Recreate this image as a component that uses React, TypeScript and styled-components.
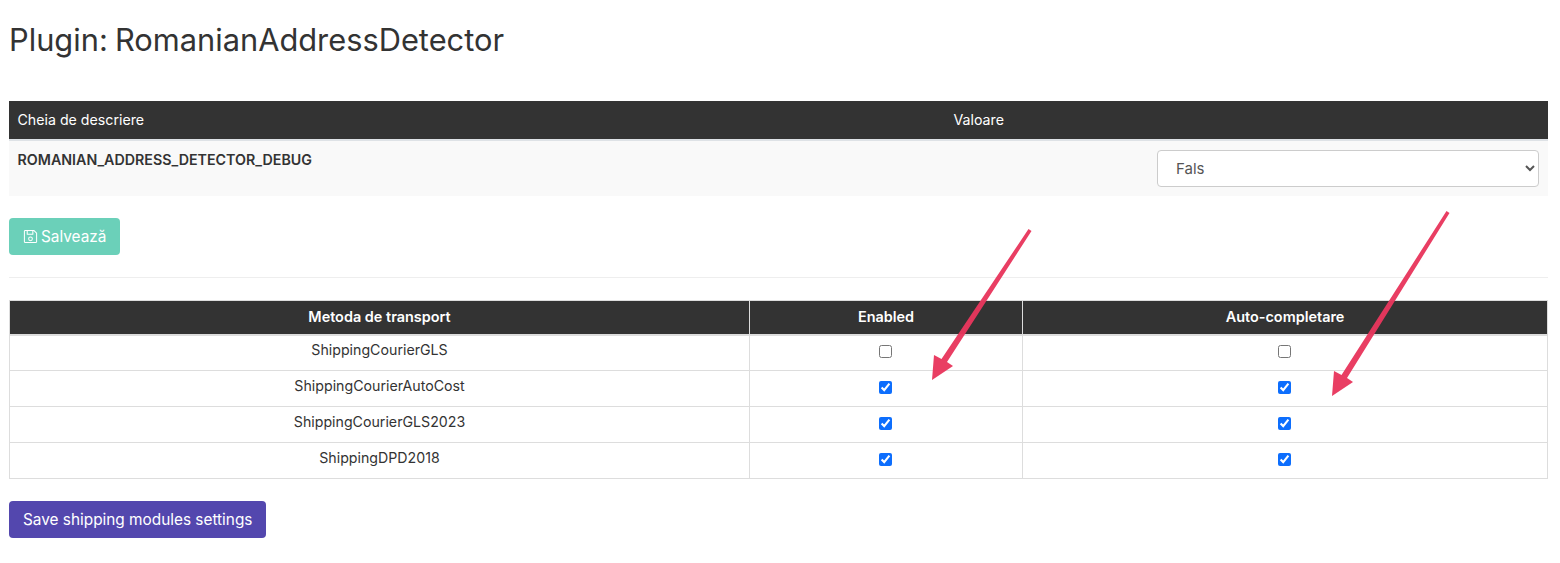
import React from "react";
import styled, { createGlobalStyle } from "styled-components";

const Global = createGlobalStyle`
  html, body { margin: 0; padding: 0; background: #fff; }
  body { font-family: Inter, "Liberation Sans", sans-serif; font-size: 14.2px; line-height: 21px; color: #333; }
  * { box-sizing: border-box; }
`;

const Page = styled.div`
  position: relative;
  width: 1560px;
  height: 563px;
  overflow: hidden;
  padding: 0 12px 0 9px;
`;

const Title = styled.h1`
  margin: 0;
  padding-top: 21px;
  height: 101px;
  font-size: 30.8px;
  line-height: 38px;
  font-weight: 400;
  word-spacing: -1.5px;
  color: #333;
`;

const SettingsTable = styled.table`
  width: 100%;
  border-collapse: collapse;
  table-layout: fixed;
`;

const SettingsHead = styled.th`
  height: 39px;
  padding: 0 8.5px 1px;
  background: #333;
  color: #fff;
  font-weight: 400;
  text-align: left;
  border-bottom: 2px solid #dee2e6;
`;

const SettingsRow = styled.tr`
  background: #f9f9f9;
`;

const KeyCell = styled.td`
  height: 55px;
  padding: 8px 8.5px;
  vertical-align: top;
  font-size: 14.25px;
  font-weight: 600;
`;

const ValueCell = styled.td`
  padding: 9px 9px 9px 8px;
  vertical-align: top;
`;

const ValueInner = styled.div`
  display: flex;
  justify-content: flex-end;
`;

const Select = styled.select`
  width: 382px;
  height: 37px;
  padding: 0 14px;
  font: 400 15px/21px Inter, sans-serif;
  color: #555;
  background: #fff;
  border: 1px solid #ccc;
  border-radius: 4px;
`;

const Button = styled.button<{ $bg: string }>`
  display: inline-flex;
  align-items: center;
  gap: 3px;
  height: 37px;
  padding: 0 14px;
  font: 400 15.36px/21px Inter, sans-serif;
  color: #fff;
  background: ${(p) => p.$bg};
  border: 0;
  border-radius: 4px;
`;

const SaveWrap = styled.div`
  margin-top: 22px;
  display: flex;
`;

const Divider = styled.hr`
  margin: 22px 0 22px;
  border: 0;
  border-top: 1px solid #eee;
`;

const ShippingTable = styled.table`
  width: 100%;
  border-collapse: collapse;
  table-layout: fixed;
  border: 1px solid #ddd;
`;

const ShipHead = styled.th`
  height: 34px;
  padding: 0 0 1px;
  background: #333;
  color: #fff;
  font-weight: 600;
  font-size: 14.45px;
  text-align: center;
  border-left: 1px solid #ddd;
  border-bottom: 2px solid #ddd;
  &:first-child { border-left: 0; }
`;

const ShipRow = styled.tr`
  &:first-child td { padding-top: 3px; }
`;

const ShipCell = styled.td`
  height: 36px;
  padding: 4px 8px;
  vertical-align: top;
  text-align: center;
  border: 1px solid #ddd;
`;

const Check = styled.input`
  display: block;
  margin: 6px auto 0;
  position: relative;
  left: -1px;
  width: 13px;
  height: 13px;
  accent-color: #0d6efd;
`;

const BottomWrap = styled.div`
  margin-top: 22px;
  display: flex;
`;

const Arrows = styled.svg`
  position: absolute;
  inset: 0;
  pointer-events: none;
`;

const rows: [string, boolean][] = [
  ["ShippingCourierGLS", false],
  ["ShippingCourierAutoCost", true],
  ["ShippingCourierGLS2023", true],
  ["ShippingDPD2018", true],
];

export default function App() {
  return (
    <Page>
      <Global />
      <Title>Plugin: RomanianAddressDetector</Title>
      <SettingsTable>
        <colgroup>
          <col style={{ width: 936 }} />
          <col />
        </colgroup>
        <thead>
          <tr>
            <SettingsHead>Cheia de descriere</SettingsHead>
            <SettingsHead>Valoare</SettingsHead>
          </tr>
        </thead>
        <tbody>
          <SettingsRow>
            <KeyCell>ROMANIAN_ADDRESS_DETECTOR_DEBUG</KeyCell>
            <ValueCell>
              <ValueInner>
                <Select defaultValue="0">
                  <option value="0">Fals</option>
                  <option value="1">Adevărat</option>
                </Select>
              </ValueInner>
            </ValueCell>
          </SettingsRow>
        </tbody>
      </SettingsTable>
      <SaveWrap>
        <Button $bg="#6bd0b9">
          <svg width="15" height="15" viewBox="0 0 16 16" fill="none" stroke="#fff" strokeWidth="1.1" strokeLinejoin="round">
            <path d="M2.5 1.5h9l3 3v9a1 1 0 0 1-1 1h-11a1 1 0 0 1-1-1v-11a1 1 0 0 1 1-1z" />
            <path d="M4.5 1.5v4h6v-4" />
            <circle cx="8" cy="10.5" r="2" />
          </svg>
          Salvează
        </Button>
      </SaveWrap>
      <Divider />
      <ShippingTable>
        <colgroup>
          <col style={{ width: 740 }} />
          <col style={{ width: 273 }} />
          <col />
        </colgroup>
        <thead>
          <tr>
            <ShipHead>Metoda de transport</ShipHead>
            <ShipHead>Enabled</ShipHead>
            <ShipHead>Auto-completare</ShipHead>
          </tr>
        </thead>
        <tbody>
          {rows.map(([name, on]) => (
            <ShipRow key={name}>
              <ShipCell>{name}</ShipCell>
              <ShipCell><Check type="checkbox" defaultChecked={on} /></ShipCell>
              <ShipCell><Check type="checkbox" defaultChecked={on} /></ShipCell>
            </ShipRow>
          ))}
        </tbody>
      </ShippingTable>
      <BottomWrap>
        <Button $bg="#5347ae">Save shipping modules settings</Button>
      </BottomWrap>
      <Arrows width="1560" height="563" viewBox="0 0 1560 563">
        <g fill="#e8365d" fillOpacity="0.96">
          <path d="M1028.5 229 L1031.5 231 L947 362 L953 366 L932 380 L934 355 L941.5 359 Z" />
          <path d="M1446.5 211 L1449.5 213 L1347 378 L1353 382 L1332 396 L1334 371 L1341.5 375 Z" />
        </g>
      </Arrows>
    </Page>
  );
}
